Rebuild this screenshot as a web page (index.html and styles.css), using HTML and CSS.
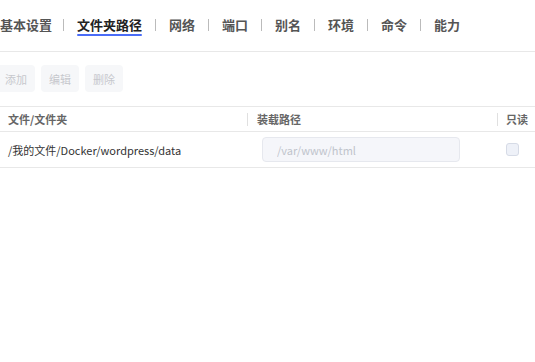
FILE: index.html
```html
<!DOCTYPE html>
<html lang="zh-CN">

<head>
    <meta charset="UTF-8">
    <meta name="viewport" content="width=device-width, initial-scale=1.0">
    <title>文件夹路径</title>
    <link rel="stylesheet" href="styles.css">
</head>

<body>

    <div class="panel">
        <div class="tabs">
            <div class="tab">基本设置</div>
            <div class="tab-sep"></div>
            <div class="tab active">文件夹路径</div>
            <div class="tab-sep"></div>
            <div class="tab">网络</div>
            <div class="tab-sep"></div>
            <div class="tab">端口</div>
            <div class="tab-sep"></div>
            <div class="tab">别名</div>
            <div class="tab-sep"></div>
            <div class="tab">环境</div>
            <div class="tab-sep"></div>
            <div class="tab">命令</div>
            <div class="tab-sep"></div>
            <div class="tab">能力</div>
        </div>

        <div class="toolbar">
            <button class="btn" disabled>添加</button>
            <button class="btn" disabled>编辑</button>
            <button class="btn" disabled>删除</button>
        </div>

        <div class="table">
            <div class="row head">
                <div class="cell col-path">文件/文件夹</div>
                <div class="cell col-mount"><span class="col-sep"></span>装载路径</div>
                <div class="cell col-ro"><span class="col-sep"></span>只读</div>
            </div>
            <div class="row">
                <div class="cell col-path">/我的文件/Docker/wordpress/data</div>
                <div class="cell col-mount">
                    <input type="text" class="mount-input" placeholder="/var/www/html">
                </div>
                <div class="cell col-ro">
                    <span class="checkbox"></span>
                </div>
            </div>
        </div>
    </div>

</body>

</html>
```

FILE: styles.css
```css
body {
    margin: 0;
    padding: 0;
    background-color: white;
    font-family: "Noto Sans CJK SC", "Noto Sans", sans-serif;
    overflow: hidden;
}

.panel {
    margin-left: -3px;
    width: 560px;
}

/* tab bar */
.tabs {
    display: flex;
    align-items: center;
    height: 50px;
    padding-bottom: 1px;
    box-sizing: border-box;
    height: 52px;
    border-bottom: 1px solid #e8e8e8;
}

.tab {
    position: relative;
    padding: 0 13px;
    font-size: 13px;
    font-weight: bold;
    color: #555;
    line-height: 48px;
}

.tab:first-child {
    padding-left: 3px;
    padding-right: 11px;
}

.tab.active {
    color: #222;
}

.tab.active::after {
    content: "";
    position: absolute;
    left: 13px;
    right: 13px;
    top: 33px;
    height: 2px;
    background-color: #4a6cf7;
    border-radius: 1px;
}

.tab-sep {
    width: 1px;
    height: 12px;
    background-color: #bbb;
}

/* buttons */
.toolbar {
    display: flex;
    gap: 6px;
    padding: 13px 0 14px 0;
}

.btn {
    height: 27px;
    padding: 0 8px;
    border: none;
    border-radius: 4px;
    background-color: #f6f7f9;
    color: #c6c8cd;
    font-family: inherit;
    font-size: 11px;
}

/* table */
.table {
    border-top: 1px solid #e8e8e8;
}

.row {
    display: flex;
    align-items: center;
    height: 35px;
    border-bottom: 1px solid #e8e8e8;
    font-size: 11px;
    color: #333;
}

.row.head {
    height: 24px;
    font-weight: bold;
    color: #666;
}

.cell {
    position: relative;
    display: flex;
    align-items: center;
    height: 100%;
    box-sizing: border-box;
}

.col-path {
    width: 250px;
    padding-left: 11px;
}

.col-mount {
    width: 250px;
    padding-left: 10px;
}

.col-ro {
    flex: 1;
    padding-left: 9px;
}

.col-sep {
    position: absolute;
    left: 0;
    top: 6px;
    width: 1px;
    height: 13px;
    background-color: #e0e0e0;
}

.mount-input {
    width: 198px;
    height: 25px;
    box-sizing: border-box;
    margin-left: 5px;
    padding: 0 14px;
    border: 1px solid #e6e8ee;
    border-radius: 4px;
    background-color: #f5f6fa;
    font-family: inherit;
    font-size: 11px;
    outline: none;
}

.mount-input::placeholder {
    color: #c0c4cc;
}

.checkbox {
    width: 13px;
    height: 13px;
    box-sizing: border-box;
    border: 1px solid #d6dbe6;
    border-radius: 3px;
    background-color: #eef1f8;
}
```
